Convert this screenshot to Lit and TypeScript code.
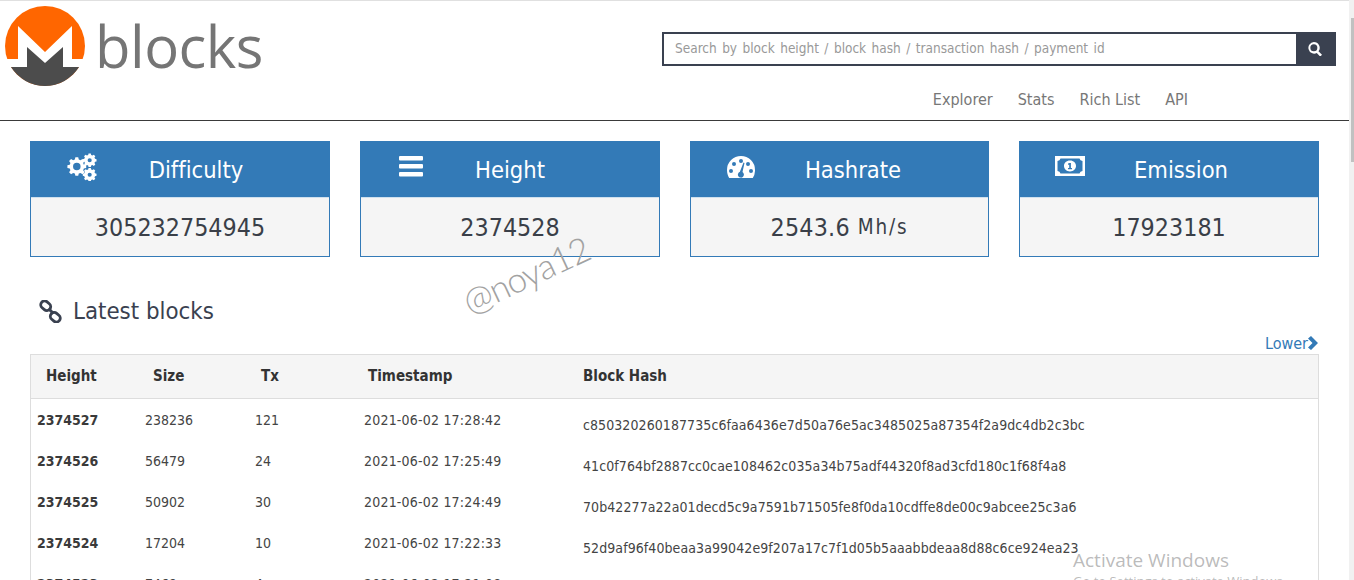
import { LitElement, html, css, svg } from "lit";
import { customElement } from "lit/decorators.js";

const rows = [
  ["2374527", "238236", "121", "2021-06-02 17:28:42", "c850320260187735c6faa6436e7d50a76e5ac3485025a87354f2a9dc4db2c3bc"],
  ["2374526", "56479", "24", "2021-06-02 17:25:49", "41c0f764bf2887cc0cae108462c035a34b75adf44320f8ad3cfd180c1f68f4a8"],
  ["2374525", "50902", "30", "2021-06-02 17:24:49", "70b42277a22a01decd5c9a7591b71505fe8f0da10cdffe8de00c9abcee25c3a6"],
  ["2374524", "17204", "10", "2021-06-02 17:22:33", "52d9af96f40beaa3a99042e9f207a17c7f1d05b5aaabbdeaa8d88c6ce924ea23"],
  ["2374523", "7469", "4", "2021-06-02 17:21:08", ""],
];

const gear = svg`<path fill-rule="evenodd" d="M10 4.500 L13 4.500 L13.600 7 L15.400 7.800 L17.600 6.400 L19.700 8.500 L18.300 10.700 L19 12.500 L21.500 13 L21.500 16 L19 16.600 L18.300 18.400 L19.700 20.600 L17.600 22.700 L15.400 21.300 L13.600 22 L13 24.500 L10 24.500 L9.400 22 L7.600 21.300 L5.400 22.700 L3.300 20.600 L4.700 18.400 L4 16.600 L1.500 16 L1.500 13 L4 12.500 L4.700 10.700 L3.300 8.500 L5.400 6.400 L7.600 7.800 L9.400 7 Z M11.500 10.500 A4 4 0 1 0 11.500 18.500 A4 4 0 1 0 11.500 10.500 Z"/>
<path fill-rule="evenodd" d="M24 0.500 h2.400 l.4 1.600 1.300.6 1.500-.9 1.600 1.600-.9 1.500.6 1.300 1.600.4 v2.400 l-1.600.4-.6 1.300.9 1.500-1.600 1.600-1.500-.9-1.300.6-.4 1.600 h-2.400 l-.4-1.600-1.300-.6-1.500.9-1.600-1.600.9-1.500-.6-1.300-1.600-.4 v-2.400 l1.600-.4.6-1.300-.9-1.500 1.600-1.600 1.500.9 1.300-.6 Z M25.200 5.600 a2.200 2.200 0 1 0 0 4.400 a2.200 2.200 0 1 0 0-4.400 Z"/>
<path fill-rule="evenodd" d="M24 16 h2.400 l.4 1.600 1.300.6 1.500-.9 1.600 1.600-.9 1.500.6 1.300 1.600.4 v2.400 l-1.600.4-.6 1.300.9 1.500-1.600 1.600-1.500-.9-1.300.6-.4 1.600 h-2.400 l-.4-1.600-1.300-.6-1.500.9-1.600-1.600.9-1.500-.6-1.300-1.600-.4 v-2.400 l1.600-.4.6-1.300-.9-1.500 1.600-1.600 1.500.9 1.300-.6 Z M25.200 21.100 a2.200 2.200 0 1 0 0 4.400 a2.200 2.200 0 1 0 0-4.400 Z"/>`;

const icons = [
  html`<svg class="i1" viewBox="0 0 33 30" preserveAspectRatio="none">${gear}</svg>`,
  html`<svg class="i2" viewBox="0 0 24 22"><rect y="1" width="24" height="4.500" rx="1"/><rect y="9" width="24" height="4.500" rx="1"/><rect y="17" width="24" height="4.500" rx="1"/></svg>`,
  html`<svg class="i3" viewBox="0 0 28 24"><path fill-rule="evenodd" d="M14 1A14 14 0 0 0 0 15c0 3 .8 5.700 2.200 8h23.600A14 14 0 0 0 28 15 14 14 0 0 0 14 1ZM14 4a2 2 0 1 1 0 4a2 2 0 0 1 0-4ZM7 7a2 2 0 1 1 0 4a2 2 0 0 1 0-4ZM21 7a2 2 0 1 1 0 4a2 2 0 0 1 0-4ZM4 14a2 2 0 1 1 0 4a2 2 0 0 1 0-4ZM24 14a2 2 0 1 1 0 4a2 2 0 0 1 0-4ZM16.500 7.500l1 .4-2 9.200a3 3 0 1 1-2.600-.3Z"/></svg>`,
  html`<svg class="i4" viewBox="0 0 30 24" preserveAspectRatio="none"><path fill-rule="evenodd" d="M0 0h30v24H0ZM2.500 6v12a4 4 0 0 1 3 3h19a4 4 0 0 1 3-3V6a4 4 0 0 1-3-3h-19a4 4 0 0 1-3 3ZM15 5.500c3.600 0 6 2.900 6 6.500s-2.400 6.500-6 6.500-6-2.900-6-6.500 2.400-6.500 6-6.500ZM13 9v1.500h1.200v4H13V16h4v-1.500h-1.100V8.500h-1.300Z"/></svg>`,
];

const cards = [
  { label: "Difficulty", shift: 32, value: html`305232754945` },
  { label: "Height", shift: 0, value: html`2374528` },
  { label: "Hashrate", shift: 27, value: html`<span class="rate">2543.6</span><small>Mh/s</small>` },
  { label: "Emission", shift: 24, value: html`17923181` },
];

@customElement("app-root")
export class AppRoot extends LitElement {
  static styles = css`
    :host { display: block; height: 580px; overflow: hidden; position: relative; background: #fff;
      font-family: Tahoma, "DejaVu Sans Condensed", "Noto Sans", sans-serif; color: #333; font-variant-ligatures: none; }
    .page { display: flex; height: 580px; }
    .main { width: 1349px; flex: none; overflow: hidden; }
    .scroll { width: 5px; flex: none; background: #f1f1f1; }
    .thumb { width: 3px; height: 144px; margin: 18px 0 0 2px; background: #c1c1c1; }
    header { height: 119px; border-top: 1px solid #e0e0e0; border-bottom: 1px solid #3a3a3a; display: flex; justify-content: space-between; }
    .brand { display: flex; align-items: flex-start; padding: 5px 0 0 5px; gap: 10px; }
    .brand svg { width: 80px; height: 80px; display: block; }
    .word { font-family: "Open Sans", sans-serif; font-size: 58px; line-height: 80px; color: #757575; letter-spacing: -0.5px; }
    .right { display: flex; flex-direction: column; align-items: flex-end; padding: 31px 13px 0 0; }
    .search { width: 674px; height: 34px; display: flex; box-sizing: border-box; border: 2px solid #3a4150; background: #fff; }
    .ph { flex: 1; font-size: 13.500px; word-spacing: 1.600px; line-height: 29px; color: #999; padding-left: 11px; }
    .btn { width: 38px; background: #3a4150; display: flex; align-items: center; justify-content: center; }
    .btn svg { width: 14px; height: 14px; fill: #fff; display: block; }
    nav { display: flex; gap: 25px; font-size: 16px; color: #777; margin-top: 24px; padding-right: 148px; line-height: 20px; }
    .stats { display: grid; grid-template-columns: 300px 300px 299px 300px; gap: 30px; padding: 20px 30px 0; }
    .card { border: 1px solid #337ab7; background: #f5f5f5; height: 116px; box-sizing: border-box; }
    .head { height: 56px; background: #337ab7; color: #fff; position: relative; display: flex; align-items: center; justify-content: center; font-size: 23.500px; border-bottom: 1px solid #cfe0ee; box-sizing: border-box; }
    .head svg { position: absolute; fill: #fff; display: block; }
    .i1 { left: 35px; top: 11px; width: 31px; height: 28px; }
    .i2 { left: 38px; top: 13px; width: 24px; height: 22px; }
    .i3 { left: 36px; top: 13px; width: 28px; height: 24px; }
    .i4 { left: 35px; top: 14px; width: 30px; height: 20px; }
    .val { height: 58px; display: flex; align-items: center; justify-content: center; font-size: 24.800px; color: #3a3f48; }
    .rate { letter-spacing: .2px; }
    .val small { font-size: 20.500px; letter-spacing: 1.800px; margin-left: 8px; }
    .title { display: flex; align-items: center; gap: 11px; margin: 36px 0 0 39px; height: 36px; font-size: 23.800px; color: #3a4150; }
    .title svg { width: 23px; height: 23px; fill: none; stroke: #3a4150; stroke-width: 3; display: block; }
    .lower { display: flex; justify-content: flex-end; align-items: center; height: 20px; margin: 4px 31px 0 0; color: #337ab7; font-size: 16px; }
    .lower svg { width: 10px; height: 14px; fill: #337ab7; display: block; }
    .tbl { margin: 1px 30px 0; border: 1px solid #ddd; border-bottom: 0; height: 240px; }
    .tr { display: grid; align-items: start; }
    .th { grid-template-columns: 107px 108px 107px 215px 1fr; height: 43px; background: #f5f5f5; border-bottom: 1px solid #ddd; font-weight: bold; font-size: 15px; line-height: 43px; color: #333; }
    .th div { padding-left: 15px; }
    .td { grid-template-columns: 108px 110px 109px 219px 1fr; height: 41px; font-size: 14px; color: #444; padding-top: 11px; box-sizing: border-box; line-height: 20px; }
    .td div { padding-left: 6px; }
    .td .h { font-weight: bold; color: #3a3a3a; }
    .td .ts { letter-spacing: .2px; }
    .td .hash { padding-left: 6px; position: relative; top: 5px; letter-spacing: .08px; }
    .note { position: absolute; left: 472px; top: 284px; font-family: Lato, sans-serif; font-size: 35px; font-weight: 300; color: #a2a2a2; transform: rotate(-25deg); transform-origin: left bottom; line-height: 1; letter-spacing: -1px; }
    .win { position: absolute; left: 1073px; top: 548px; color: rgba(130,130,130,.55); font-family: "Open Sans", sans-serif; font-size: 19px; line-height: 25px; white-space: nowrap; }
    .win div + div { font-size: 13px; line-height: 16px; }
  `;

  render() {
    return html`<div class="page">
      <div class="main">
        <header>
          <div class="brand">
            <svg viewBox="0 0 80 80" aria-label="Monero">
              <circle cx="40" cy="40" r="40" fill="#ff6600"/>
              <path d="M0 53 H13 V20 L40 46 L67 20 V53 H80 V61 H0 Z" fill="#fff"/>
              <path d="M6 61 H22 V41 L40 57 L58 41 V61 H74 A40 40 0 0 1 6 61 Z" fill="#4c4c4c"/>
            </svg>
            <div class="word">blocks</div>
          </div>
          <div class="right">
            <div class="search">
              <div class="ph">Search by block height / block hash / transaction hash / payment id</div>
              <div class="btn"><svg viewBox="0 0 24 24"><path fill-rule="evenodd" d="M10 0a10 10 0 0 1 8 16l6 6-3 3-6-6A10 10 0 1 1 10 0Zm0 4a6 6 0 1 0 0 12a6 6 0 0 0 0-12Z"/></svg></div>
            </div>
            <nav><span>Explorer</span><span>Stats</span><span>Rich List</span><span>API</span></nav>
          </div>
        </header>
        <section class="stats">
          ${cards.map((c, i) => html`<div class="card"><div class="head">${icons[i]}<span style="margin-left:${c.shift}px">${c.label}</span></div><div class="val">${c.value}</div></div>`)}
        </section>
        <div class="title">
          <svg viewBox="0 0 24 24"><rect x="1.500" y="2" width="11" height="8" rx="4" transform="rotate(40 7 6)"/><rect x="11.500" y="14" width="11" height="8" rx="4" transform="rotate(40 17 18)"/><path d="M10 9l5 5"/></svg>
          <span>Latest blocks</span>
        </div>
        <div class="lower"><span>Lower</span><svg viewBox="0 0 10 14"><path d="M3 0l7 7-7 7-3-2.500L4.500 7 0 2.500Z"/></svg></div>
        <div class="tbl">
          <div class="tr th"><div>Height</div><div>Size</div><div>Tx</div><div>Timestamp</div><div>Block Hash</div></div>
          ${rows.map((r) => html`<div class="tr td"><div class="h">${r[0]}</div><div>${r[1]}</div><div>${r[2]}</div><div class="ts">${r[3]}</div><div class="hash">${r[4]}</div></div>`)}
        </div>
      </div>
      <div class="scroll"><div class="thumb"></div></div>
    </div>
    <div class="note">@noya12</div>
    <div class="win"><div>Activate Windows</div><div>Go to Settings to activate Windows.</div></div>`;
  }
}
